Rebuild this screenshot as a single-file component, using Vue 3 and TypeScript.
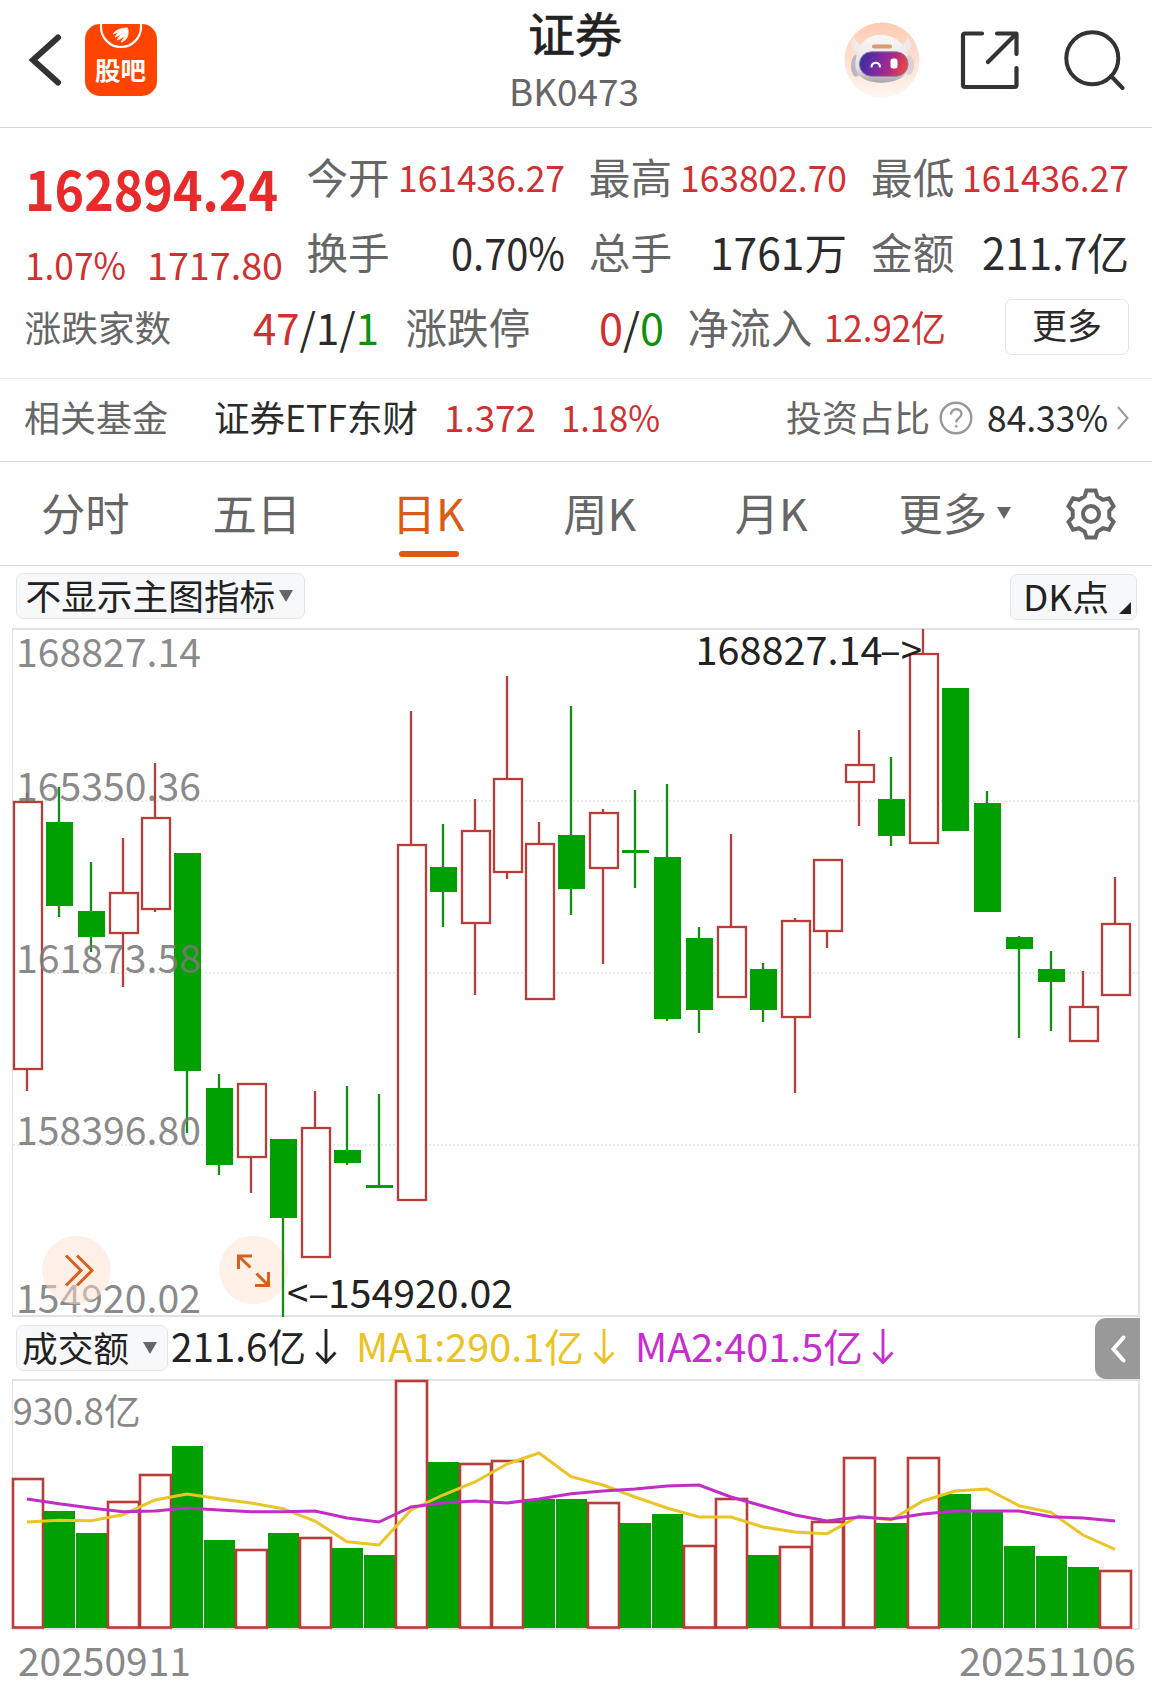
<script setup lang="ts">
import type { Directive } from 'vue'

// Condenses a text run horizontally so that it takes the given width in the flow.
const vFit: Directive<HTMLElement, number> = {
  mounted(el, { value }) {
    const natural = el.getBoundingClientRect().width
    el.style.transform = `scaleX(${value / natural})`
    el.style.marginRight = `${value - natural}px`
  },
}

interface Quote { label: string; value: string; width: number; tone: string }
const quotes: Quote[] = [
  { label: '今开', value: '161436.27', width: 167, tone: 'up small' },
  { label: '最高', value: '163802.70', width: 167, tone: 'up small' },
  { label: '最低', value: '161436.27', width: 167, tone: 'up small' },
  { label: '换手', value: '0.70%', width: 114, tone: '' },
  { label: '总手', value: '1761万', width: 137, tone: '' },
  { label: '金额', value: '211.7亿', width: 147, tone: '' },
]

const tabs = ['分时', '五日', '日K', '周K', '月K', '更多']

// [rising, high, body top, body bottom, low]
type Candle = [number, number, number, number, number]
const candles: Candle[] = [
  [1, 793, 801, 1070, 1091], [0, 787, 822, 906, 917], [0, 862, 911, 937, 952],
  [1, 838, 892, 934, 987], [1, 763, 817, 910, 912], [0, 853, 853, 1071, 1133],
  [0, 1074, 1088, 1165, 1175], [1, 1083, 1083, 1158, 1193], [0, 1139, 1139, 1218, 1317],
  [1, 1091, 1127, 1258, 1258], [0, 1086, 1150, 1163, 1165], [0, 1094, 1185, 1188, 1188],
  [1, 711, 844, 1201, 1201], [0, 824, 867, 892, 927], [1, 799, 830, 924, 995],
  [1, 676, 778, 873, 879], [1, 822, 843, 1000, 1000], [0, 706, 835, 889, 915],
  [1, 809, 812, 869, 964], [0, 790, 850, 853, 888], [0, 784, 857, 1019, 1021],
  [0, 927, 938, 1010, 1033], [1, 834, 926, 998, 998], [0, 963, 969, 1010, 1022],
  [1, 918, 920, 1018, 1093], [1, 859, 859, 932, 948], [1, 730, 764, 783, 826],
  [0, 757, 799, 836, 846], [1, 629, 653, 844, 844], [0, 688, 688, 831, 831],
  [0, 791, 803, 912, 912], [0, 936, 937, 949, 1038], [0, 951, 969, 982, 1031],
  [1, 971, 1006, 1042, 1042], [1, 877, 923, 996, 996],
]

const volumeTops = [
  1478, 1511, 1533, 1501, 1474, 1446, 1540, 1549, 1533, 1537, 1548, 1555,
  1380, 1462, 1463, 1460, 1499, 1499, 1502, 1523, 1514, 1545, 1498, 1555,
  1546, 1521, 1457, 1523, 1457, 1494, 1512, 1546, 1556, 1567, 1570,
]
const volumeRising = [
  1, 0, 0, 1, 1, 0, 0, 1, 0, 1, 0, 0, 1, 0, 1, 1, 0, 0, 1, 0, 0, 1, 1, 0,
  1, 1, 1, 0, 1, 0, 0, 0, 0, 0, 1,
]
const ma1 = [
  1522, 1520.3, 1520.7, 1514.7, 1500, 1494, 1498.7, 1503, 1508.7, 1521, 1541.7, 1545,
  1510, 1495, 1482, 1464, 1453, 1476.7, 1485, 1497, 1508, 1517, 1517, 1527, 1532,
  1533.7, 1516, 1520, 1501, 1491, 1489, 1505.7, 1512.3, 1535, 1549.3,
]
const ma2 = [
  1499, 1503.7, 1508, 1511.7, 1511, 1508, 1510, 1511.7, 1511.7, 1511, 1518, 1522,
  1507, 1503, 1501, 1503, 1499, 1493.7, 1491, 1489, 1486, 1485, 1497, 1506, 1515,
  1521, 1517, 1519, 1514, 1511, 1511, 1511, 1516.7, 1518, 1521,
]
const cx = (i: number): number => 27 + 32 * i
const line = (ys: number[]): string => ys.map((y, i) => `${cx(i)},${y}`).join(' ')

const axis = [
  { text: '168827.14', y: 667 },
  { text: '165350.36', y: 801 },
  { text: '161873.58', y: 973 },
  { text: '158396.80', y: 1145 },
  { text: '154920.02', y: 1312.5 },
]

const gear = ((): string => {
  const pts: string[] = []
  for (let k = 0; k < 6; k++) {
    const a = k * 60 - 90
    const add = (deg: number, r: number) => {
      const t = ((a + deg) * Math.PI) / 180
      pts.push(`${(28 + r * Math.cos(t)).toFixed(1)},${(28 + r * Math.sin(t)).toFixed(1)}`)
    }
    add(-20, 18.6)
    add(-11, 23.8)
    add(11, 23.8)
    add(20, 18.6)
  }
  return pts.join(' ')
})()
</script>

<template>
  <div class="page">
    <header class="head">
      <svg class="back" width="36" height="60" viewBox="0 0 36 60">
        <path d="M30 7.500L5 30L30 52.500" fill="none" stroke="#333" stroke-width="6" stroke-linecap="round" stroke-linejoin="miter" />
      </svg>
      <div class="logo">
        <svg width="72" height="30" viewBox="0 0 72 30">
          <path d="M16 0V3A20 20 0 0 0 56 3V0" fill="none" stroke="#fff" stroke-width="2.200" />
          <path d="M28 10C31 6 36 4 42 4C37 7 32 9 28 10ZM30 13C34 7 38 5 43 4C39 8 34 12 30 13ZM32 16C36 10 39 7 43 5C42 10 37 15 32 16ZM36 18C40 13 41 9 43 6C44 12 41 17 36 18Z" fill="#fff" stroke="#fff" stroke-width=".8" />
        </svg>
        <span>股吧</span>
      </div>
      <div class="title">
        <h1>证券</h1>
        <p><span v-fit="130" class="fit">BK0473</span></p>
      </div>
      <svg class="robot" width="76" height="76" viewBox="0 0 76 76">
        <defs>
          <linearGradient id="halo" x1="0" y1="0" x2="0" y2="1">
            <stop offset="0" stop-color="#fecbb2" /><stop offset="1" stop-color="#fff6f2" />
          </linearGradient>
          <linearGradient id="visor" x1="0" y1="0" x2="1" y2="0.200">
            <stop offset="0" stop-color="#2b2f9e" /><stop offset=".45" stop-color="#7a2aa4" />
            <stop offset=".72" stop-color="#a92a86" /><stop offset="1" stop-color="#e2434b" />
          </linearGradient>
          <linearGradient id="shell" x1="0" y1="0" x2="0" y2="1">
            <stop offset="0" stop-color="#fbf8f8" /><stop offset=".7" stop-color="#e4dfe3" /><stop offset="1" stop-color="#a9a3aa" />
          </linearGradient>
        </defs>
        <circle cx="38" cy="38" r="37.500" fill="url(#halo)" />
        <path d="M10 15C6 21 7 29 14 30L21 23C15 23 11 20 10 15ZM63 15C69 21 68 29 60 30L53 23C60 23 63 20 63 15Z" fill="#f1eaea" />
        <ellipse cx="12" cy="44" rx="5" ry="11" fill="#bdb6bf" />
        <ellipse cx="65" cy="43" rx="5" ry="10" fill="#ddd0d4" />
        <path d="M37 13C52 13 61 22 63 35C66 47 62 54 55 57C44 62 30 62 20 57C12 53 10 46 12 36C15 21 23 13 37 13Z" fill="url(#shell)" />
        <rect x="28" y="22.500" width="20" height="4" rx="1.700" fill="#dc9a70" />
        <rect x="15.500" y="29.800" width="48.500" height="24.500" rx="12" fill="url(#visor)" stroke="#8d7f9c" stroke-width="1" />
        <path d="M27.500 44.500C28.500 39.500 35 39.500 36 44.500" fill="none" stroke="#fff" stroke-width="2.200" stroke-linecap="round" />
        <rect x="46.500" y="36.500" width="7" height="10" rx="2.500" fill="#fff" />
      </svg>
      <svg class="share" width="60" height="60" viewBox="0 0 60 60" fill="none" stroke="#333" stroke-width="4.200" stroke-linecap="round" stroke-linejoin="round">
        <path d="M22 3.500H5Q3 3.500 3 5.500V55Q3 57 5 57H54.500Q56.500 57 56.500 55V38" />
        <path d="M37 3.500H56.500V24M56 4L28 32" />
      </svg>
      <svg class="search" width="62" height="62" viewBox="0 0 62 62" fill="none" stroke="#333" stroke-width="4" stroke-linecap="round">
        <circle cx="29.300" cy="29.200" r="26" /><path d="M48 47L59.500 59" />
      </svg>
    </header>

    <section class="quote">
      <div class="main">
        <div class="left">
          <div class="price"><span v-fit="253" class="fit">162894.24</span></div>
          <div class="change">
            <span v-fit="101" class="fit">1.07%</span>
            <span v-fit="136" class="fit">1717.80</span>
          </div>
        </div>
        <div class="grid">
          <div v-for="q in quotes" :key="q.label" class="cell">
            <span class="label">{{ q.label }}</span>
            <span v-fit="q.width" class="fit value" :class="q.tone">{{ q.value }}</span>
          </div>
        </div>
      </div>
      <div class="third">
        <div class="cell wide">
          <span class="label sm">涨跌家数</span>
          <span v-fit="126" class="fit value"><b class="up">47</b>/1/<b class="down">1</b></span>
        </div>
        <div class="cell">
          <span class="label">涨跌停</span>
          <span v-fit="65" class="fit value"><b class="up">0</b>/<b class="down">0</b></span>
        </div>
        <div class="cell">
          <span class="label">净流入</span>
          <span v-fit="122" class="fit value up small">12.92亿</span>
        </div>
        <button class="more">更多</button>
      </div>
    </section>

    <section class="fund">
      <span class="grey">相关基金</span>
      <span v-fit="204" class="fit name">证券ETF东财</span>
      <span v-fit="92" class="fit up p1">1.372</span>
      <span v-fit="99" class="fit up p2">1.18%</span>
      <span class="grey ratio">投资占比</span>
      <svg width="34" height="34" viewBox="0 0 34 34" fill="none" stroke="#999" stroke-width="2.400">
        <circle cx="17" cy="17" r="15.300" />
        <path d="M12 13.500C12 6.500 22.500 6.500 22.500 13C22.500 17 17.200 16.800 17.200 21.500" /><circle cx="17.200" cy="25.300" r="1" fill="#999" stroke-width="1" />
      </svg>
      <span v-fit="121" class="fit pct">84.33%</span>
      <svg class="go" width="14" height="26" viewBox="0 0 14 26"><path d="M2 2L11.500 13L2 24" fill="none" stroke="#999" stroke-width="2" /></svg>
    </section>

    <nav class="tabs">
      <div v-for="t in tabs" :key="t" class="tab" :class="{ on: t === '日K' }">
        <span>{{ t }}</span><i v-if="t === '更多'" class="caret"></i>
      </div>
      <div class="gear">
        <svg width="56" height="56" viewBox="0 0 56 56" fill="none" stroke="#666" stroke-width="4">
          <polygon :points="gear" /><circle cx="28" cy="28" r="8" />
        </svg>
      </div>
    </nav>

    <div class="tools">
      <div class="chip main-chip"><span>不显示主图指标</span><i class="caret"></i></div>
      <div class="chip dk"><span v-fit="86" class="fit">DK点</span><i class="corner"></i></div>
    </div>

    <svg class="chart" width="1152" height="695" viewBox="0 622 1152 695">
      <g fill="none" stroke="#e2e2e2">
        <path d="M12.500 628V1317" /><path d="M12 629H1140M1139 628V1317M12 1316H1140" stroke-width="2" />
        <path d="M13 801H1138M13 973H1138M13 1145H1138" stroke-dasharray="2 2" stroke-width="1.500" />
      </g>
      <circle cx="253.500" cy="1270" r="34.300" fill="#fff0e8" />
      <g v-for="(c, i) in candles" :key="i">
        <template v-if="c[0]">
          <path :d="`M${cx(i)} ${c[1]}V${c[2]}M${cx(i)} ${c[3]}V${c[4]}`" stroke="#b83c38" stroke-width="2.300" />
          <rect :x="cx(i) - 13" :y="c[2] + 1" width="28" :height="c[3] - c[2] - 2" fill="#fff" stroke="#b83c38" stroke-width="2.300" />
        </template>
        <template v-else>
          <path :d="`M${cx(i)} ${c[1]}V${c[4]}`" stroke="#138f13" stroke-width="2.300" />
          <rect :x="cx(i) - 13" :y="c[2]" width="27" :height="c[3] - c[2]" fill="#00a000" />
        </template>
      </g>
      <g font-size="39.500" fill="#7a7a7a" fill-opacity=".88">
        <text v-for="a in axis" :key="a.text" x="16" :y="a.y" textLength="185" lengthAdjust="spacingAndGlyphs">{{ a.text }}</text>
      </g>
      <g font-size="39.500" fill="#222">
        <text x="695.500" y="665" textLength="187" lengthAdjust="spacingAndGlyphs">168827.14</text>
        <text x="880" y="665" textLength="42" lengthAdjust="spacingAndGlyphs">–&gt;</text>
        <text x="287" y="1307.500" textLength="42" lengthAdjust="spacingAndGlyphs">&lt;–</text>
        <text x="328" y="1307.500" textLength="185" lengthAdjust="spacingAndGlyphs">154920.02</text>
      </g>
      <circle cx="76.400" cy="1270" r="34.300" fill="#ffe1d0" fill-opacity=".5" />
      <g fill="none" stroke="#d9601c" stroke-width="3">
        <path d="M66 1255.500L81 1270.500L66 1285.500M77 1255.500L92 1270.500L77 1285.500" />
        <path d="M252 1256H238.500V1269M239 1256.500L250.500 1267.500M255 1285.500H268.500V1272M268 1285L256.500 1273.500" />
      </g>
    </svg>

    <div class="info">
      <div class="chip vol"><span>成交额</span><i class="caret"></i></div>
      <div class="stat black"><span v-fit="135" class="fit">211.6亿</span><svg width="22" height="36" viewBox="0 0 22 36"><path d="M11 0V33M1.500 23.500L11 33.500L20.500 23.500" /></svg></div>
      <div class="stat gold"><span v-fit="228" class="fit">MA1:290.1亿</span><svg width="22" height="36" viewBox="0 0 22 36"><path d="M11 0V33M1.500 23.500L11 33.500L20.500 23.500" /></svg></div>
      <div class="stat violet"><span v-fit="228" class="fit">MA2:401.5亿</span><svg width="22" height="36" viewBox="0 0 22 36"><path d="M11 0V33M1.500 23.500L11 33.500L20.500 23.500" /></svg></div>
      <div class="drawer"><svg width="18" height="32" viewBox="0 0 18 32"><path d="M14.500 4.500L4.500 16L14.500 27.500" fill="none" stroke="#fff" stroke-width="4" stroke-linecap="round" /></svg></div>
    </div>

    <svg class="chart" width="1152" height="252" viewBox="0 1379 1152 252">
      <g fill="none" stroke="#e2e2e2">
        <path d="M12.500 1379V1629" /><path d="M12 1380H1140M1139 1379V1629M12 1629H1140" stroke-width="2" />
      </g>
      <text x="12.500" y="1424.500" font-size="36.500" fill="#888" textLength="128" lengthAdjust="spacingAndGlyphs">930.8亿</text>
      <template v-for="(y, i) in volumeTops" :key="i">
        <rect v-if="volumeRising[i]" :x="i ? cx(i) - 15 : 13" :y="y + 1" :width="i ? 31 : 30" :height="1626.500 - y" fill="#fff" stroke="#b83c38" stroke-width="2.600" />
        <rect v-else :x="cx(i) - 15" :y="y" width="31" :height="1628 - y" fill="#00a000" />
      </template>
      <polyline :points="line(ma1)" fill="none" stroke="#ebc425" stroke-width="3" />
      <polyline :points="line(ma2)" fill="none" stroke="#c22dc6" stroke-width="3" />
    </svg>

    <footer class="dates"><span v-fit="173" class="fit">20250911</span><span v-fit="177" class="fit">20251106</span></footer>
  </div>
</template>

<style>
body { background: #fff; }
</style>

<style scoped>
.page {
  width: 1152px; height: 1700px; overflow: hidden; background: #fff; color: #2b2b2b;
  font-family: "Noto Sans CJK SC", "Noto Sans", sans-serif; display: flex; flex-direction: column;
}
.page * { box-sizing: border-box; }
.fit { display: inline-block; transform-origin: 0 50%; white-space: pre; flex: none; }
svg { display: block; flex: none; }
b { font-weight: 400; }
.up { color: #d03030; }
.down { color: #109010; }

.head { height: 128px; border-bottom: 1.500px solid #d6d6d6; display: flex; align-items: center; flex: none; padding-bottom: 7px; }
.back { margin-left: 28px; }
.logo { width: 72px; height: 72px; margin-left: 20.500px; border-radius: 15px; background: #ff4400; overflow: hidden; display: flex; flex-direction: column; align-items: center; }
.logo span { color: #fff; font-size: 25.500px; font-weight: 700; line-height: 30px; }
.title { width: 144px; margin-left: 345.500px; text-align: center; }
.title h1 { margin: 0; font-size: 47px; font-weight: 400; line-height: 62px; color: #222; -webkit-text-stroke: 0.700px #222; position: relative; left: 1px; top: -1px; }
.title p { margin: 0; font-size: 36.500px; line-height: 54px; color: #666; }
.robot { margin-left: 197.500px; }
.share { margin-left: 40px; }
.search { margin-left: 43px; }

.quote { height: 251px; border-bottom: 1.500px solid #eee; padding-top: 11px; flex: none; }
.main { display: flex; height: 150px; }
.left { width: 306.500px; padding: 12px 0 0 25px; }
.price { font-size: 56px; line-height: 72px; height: 72px; font-weight: 700; color: #e82a2a; }
.change { display: flex; gap: 21px; margin-top: 16px; font-size: 37.500px; line-height: 50px; color: #d03030; }
.grid { display: grid; grid-template-columns: repeat(3, 258px); grid-template-rows: 75px 75px; column-gap: 24.300px; }
.cell { display: flex; justify-content: space-between; align-items: center; line-height: 75px; width: 258px; }
.cell.wide { width: 354px; }
.label { font-size: 41.600px; color: #666; }
.label.sm { font-size: 36.700px; }
.value { font-size: 43px; }
.value.small { font-size: 36.400px; }
.third { display: flex; align-items: center; height: 75px; padding-left: 24.500px; }
.third .cell + .cell { margin-left: 27px; }
.third .cell + .cell + .cell { margin-left: 24px; }
.more { width: 124px; height: 56px; margin: 1px 23px 0 auto; border: 1.500px solid #e4e4e4; border-radius: 7px; background: #fff; font: 400 35px/48px "Noto Sans CJK SC", sans-serif; color: #2b2b2b; padding: 0 0 6px; }

.fund { height: 83px; border-bottom: 1.500px solid #d6d6d6; display: flex; align-items: center; flex: none; font-size: 36.400px; line-height: 72px; padding: 0 0 8px 24px; }
.grey { color: #666; font-size: 36px; }
.name { margin-left: 45.500px; }
.fund .p1 { margin-left: 26px; }
.fund .p2 { margin-left: 25px; }
.fund .ratio { margin-left: auto; }
.fund svg { margin: 4px 0 0 9px; }
.pct { margin-left: 14px; }
.fund svg.go { margin: 4px 22px 0 8px; }

.tabs { height: 104px; border-bottom: 1.500px solid #d6d6d6; display: flex; flex: none; }
.tab { position: relative; left: -0.500px; width: 171.500px; text-align: center; font-size: 44.300px; line-height: 100px; color: #666; }
.tab.on { color: #d95b16; }
.tab.on::after { content: ""; position: absolute; left: 56px; bottom: 8px; width: 60px; height: 6px; border-radius: 3px; background: #dc5a14; }
.caret { display: block; width: 0; height: 0; border: 7.500px solid transparent; border-top: 12px solid #666; border-bottom: 0; }
.tab .caret { position: absolute; right: 18px; top: 45px; }
.gear { flex: 1; display: flex; align-items: center; justify-content: center; }

.tools { height: 56px; padding: 7px 15px 0 16px; display: flex; justify-content: space-between; flex: none; }
.chip { height: 46px; border: 1.500px solid #e2e5e8; border-radius: 7px; background: #f7f8fa; display: flex; align-items: center; font-size: 35.700px; line-height: 40px; color: #222; }
.chip span { margin-top: -3px; }
.main-chip { width: 288.500px; padding-left: 8.500px; }
.main-chip .caret { margin-left: 4px; }
.dk { width: 127px; padding-left: 12px; margin-top: 1px; position: relative; }
.corner { position: absolute; right: 5px; bottom: 5px; border-left: 12px solid transparent; border-bottom: 12px solid #222; }
.chart { font-family: "Noto Sans CJK SC", sans-serif; overflow: visible; }

.info { height: 62px; display: flex; flex: none; padding-left: 16px; position: relative; }
.vol { width: 152px; margin-top: 8px; padding-left: 5px; }
.vol .caret { margin-left: 14px; }
.stat { display: flex; align-items: center; font-size: 39px; line-height: 58px; height: 56px; }
.stat svg { fill: none; stroke: currentColor; stroke-width: 2.800; margin-left: 9px; margin-top: 4px; }
.black { color: #222; margin-left: 3px; }
.gold { color: #ecc220; margin-left: 19px; }
.violet { color: #c82cd0; margin-left: 20px; }
.drawer { margin: 1px 12px 0 auto; width: 45px; height: 61px; border-radius: 11px 0 0 11px; background: #999; display: flex; align-items: center; justify-content: center; }
.dates { height: 69px; padding: 0 16px 0 18px; display: flex; justify-content: space-between; font-size: 39.500px; line-height: 56px; color: #888; flex: none; }
</style>
